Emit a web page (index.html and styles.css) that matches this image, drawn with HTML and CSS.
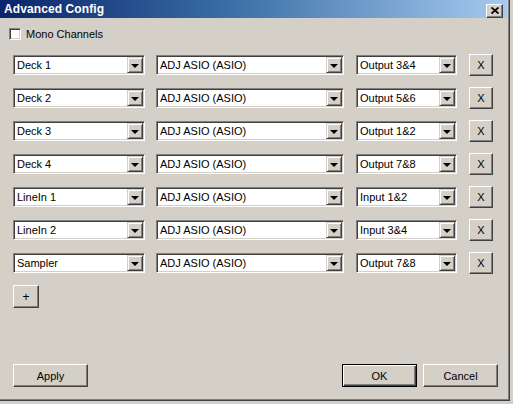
FILE: index.html
```html
<!DOCTYPE html>
<html>
<head>
<meta charset="utf-8">
<link rel="stylesheet" href="styles.css">
<title>Advanced Config</title>
</head>
<body>
<div class="window">
  <div class="titlebar">
    <span class="title">Advanced Config</span>
    <span class="close">
      <svg width="8" height="7" viewBox="0 0 8 7"><path d="M0.5 0.5 L7.5 6.5 M7.5 0.5 L0.5 6.5" stroke="#000" stroke-width="1.8" fill="none"/></svg>
    </span>
  </div>

  <label class="mono"><span class="check"></span><span>Mono Channels</span></label>

  <div class="rows">
    <div class="row">
      <div class="combo c1"><span class="val">Deck 1</span><span class="drop"><i></i></span></div>
      <div class="combo c2"><span class="val">ADJ ASIO (ASIO)</span><span class="drop"><i></i></span></div>
      <div class="combo c3"><span class="val">Output 3&amp;4</span><span class="drop"><i></i></span></div>
      <button class="btn x">X</button>
    </div>
    <div class="row">
      <div class="combo c1"><span class="val">Deck 2</span><span class="drop"><i></i></span></div>
      <div class="combo c2"><span class="val">ADJ ASIO (ASIO)</span><span class="drop"><i></i></span></div>
      <div class="combo c3"><span class="val">Output 5&amp;6</span><span class="drop"><i></i></span></div>
      <button class="btn x">X</button>
    </div>
    <div class="row">
      <div class="combo c1"><span class="val">Deck 3</span><span class="drop"><i></i></span></div>
      <div class="combo c2"><span class="val">ADJ ASIO (ASIO)</span><span class="drop"><i></i></span></div>
      <div class="combo c3"><span class="val">Output 1&amp;2</span><span class="drop"><i></i></span></div>
      <button class="btn x">X</button>
    </div>
    <div class="row">
      <div class="combo c1"><span class="val">Deck 4</span><span class="drop"><i></i></span></div>
      <div class="combo c2"><span class="val">ADJ ASIO (ASIO)</span><span class="drop"><i></i></span></div>
      <div class="combo c3"><span class="val">Output 7&amp;8</span><span class="drop"><i></i></span></div>
      <button class="btn x">X</button>
    </div>
    <div class="row">
      <div class="combo c1"><span class="val">LineIn 1</span><span class="drop"><i></i></span></div>
      <div class="combo c2"><span class="val">ADJ ASIO (ASIO)</span><span class="drop"><i></i></span></div>
      <div class="combo c3"><span class="val">Input 1&amp;2</span><span class="drop"><i></i></span></div>
      <button class="btn x">X</button>
    </div>
    <div class="row">
      <div class="combo c1"><span class="val">LineIn 2</span><span class="drop"><i></i></span></div>
      <div class="combo c2"><span class="val">ADJ ASIO (ASIO)</span><span class="drop"><i></i></span></div>
      <div class="combo c3"><span class="val">Input 3&amp;4</span><span class="drop"><i></i></span></div>
      <button class="btn x">X</button>
    </div>
    <div class="row">
      <div class="combo c1"><span class="val">Sampler</span><span class="drop"><i></i></span></div>
      <div class="combo c2"><span class="val">ADJ ASIO (ASIO)</span><span class="drop"><i></i></span></div>
      <div class="combo c3"><span class="val">Output 7&amp;8</span><span class="drop"><i></i></span></div>
      <button class="btn x">X</button>
    </div>
    <button class="btn plus">+</button>
  </div>

  <div class="footer">
    <button class="btn wide">Apply</button>
    <span class="spacer"></span>
    <button class="btn wide default">OK</button>
    <button class="btn wide">Cancel</button>
  </div>
</div>
</body>
</html>
```

FILE: styles.css
```css
html, body {
  margin: 0;
  padding: 0;
  background: #d4d0c8;
}

body {
  font-family: "Liberation Sans", Arial, sans-serif;
  font-size: 11px;
  color: #000;
}

.window {
  box-sizing: border-box;
  width: 510px;
  height: 401px;
  border-right: 1px solid #404040;
  border-bottom: 1px solid #404040;
  box-shadow: inset -1px -1px 0 #808080;
  display: flex;
  flex-direction: column;
  padding-bottom: 13px;
}

/* caption bar */
.titlebar {
  height: 18px;
  margin-right: 2px;
  background: linear-gradient(to right, #0a246a 0%, #3a6ea5 45%, #a6caf0 100%);
  display: flex;
  align-items: center;
  justify-content: space-between;
  padding-left: 4px;
  padding-right: 4px;
}

.title {
  color: #fff;
  font-weight: bold;
  font-size: 12px;
  letter-spacing: 0.1px;
}

.close {
  box-sizing: border-box;
  width: 17px;
  height: 14px;
  margin-top: 3px;
  background: #d4d0c8;
  border: 1px solid;
  border-color: #fff #404040 #404040 #fff;
  box-shadow: inset -1px -1px 0 #808080;
  display: flex;
  align-items: center;
  justify-content: center;
}

/* checkbox */
.mono {
  display: flex;
  align-items: center;
  gap: 5px;
  margin: 9px 0 0 9px;
  height: 13px;
}

.check {
  box-sizing: border-box;
  width: 12px;
  height: 12px;
  background: #fff;
  border: 1px solid;
  border-color: #808080 #fff #fff #808080;
  box-shadow: inset 1px 1px 0 #404040, inset -1px -1px 0 #d4d0c8;
}

/* device rows */
.rows {
  display: flex;
  flex-direction: column;
  gap: 11px;
  margin-top: 14px;
  padding-left: 13px;
}

.row {
  display: flex;
  align-items: center;
  height: 22px;
}

.combo {
  box-sizing: border-box;
  height: 20px;
  background: #fff;
  border: 1px solid;
  border-color: #808080 #fff #fff #808080;
  box-shadow: inset 1px 1px 0 #404040, inset -1px -1px 0 #d4d0c8;
  display: flex;
  align-items: stretch;
  padding: 1px;
}

.c1 { width: 132px; }
.c2 { width: 188px; margin-left: 11px; }
.c3 { width: 101px; margin-left: 12px; }

.val {
  flex: 1;
  padding-left: 2px;
  line-height: 16px;
  white-space: nowrap;
  overflow: hidden;
}

.drop {
  box-sizing: border-box;
  width: 16px;
  background: #d4d0c8;
  border: 1px solid;
  border-color: #d4d0c8 #404040 #404040 #d4d0c8;
  box-shadow: inset 1px 1px 0 #fff, inset -1px -1px 0 #808080;
  display: flex;
  align-items: center;
  justify-content: center;
}

.drop i {
  width: 0;
  height: 0;
  border-left: 4px solid transparent;
  border-right: 4px solid transparent;
  border-top: 4px solid #000;
  margin-top: 1px;
}

/* push buttons */
.btn {
  box-sizing: border-box;
  font-family: "Liberation Sans", Arial, sans-serif;
  font-size: 11px;
  color: #000;
  background: #d4d0c8;
  border: 1px solid;
  border-color: #fff #404040 #404040 #fff;
  box-shadow: inset -1px -1px 0 #808080;
  padding: 0;
  margin: 0;
}

.x {
  width: 24px;
  height: 22px;
  margin-left: 12px;
}

.plus {
  width: 26px;
  height: 23px;
  font-size: 12px;
}

.footer {
  margin-top: auto;
  display: flex;
  align-items: center;
  gap: 6px;
  padding-left: 13px;
  padding-right: 11px;
}

.spacer { flex: 1; }

.wide {
  width: 75px;
  height: 23px;
}

.default {
  border: 1px solid #000;
  box-shadow: inset 1px 1px 0 #fff, inset -1px -1px 0 #404040, inset -2px -2px 0 #808080;
}
```
